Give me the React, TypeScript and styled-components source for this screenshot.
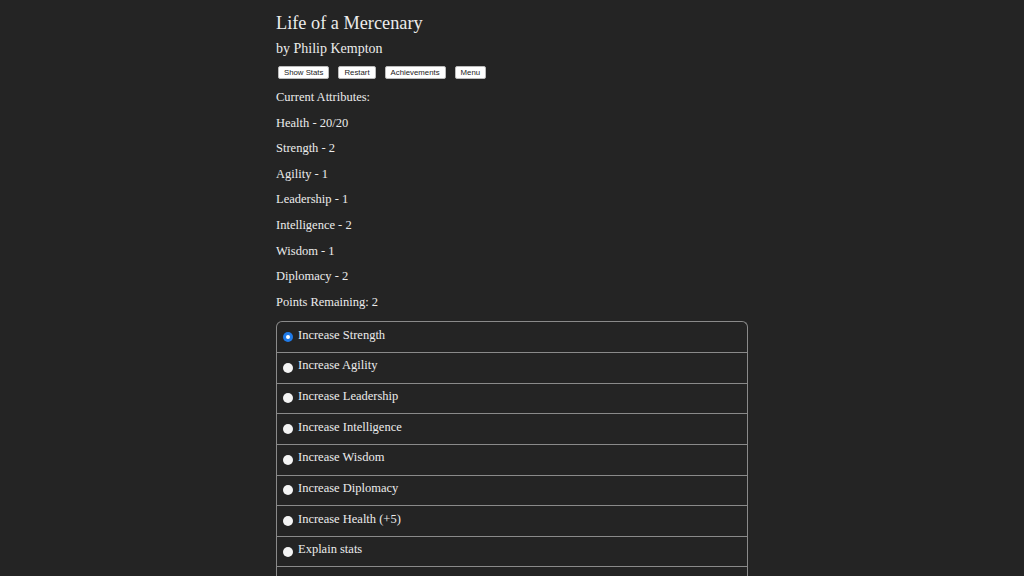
import React, { useState } from "react";
import styled, { createGlobalStyle } from "styled-components";

const GlobalStyle = createGlobalStyle`
  html, body {
    margin: 0;
    padding: 0;
    background: #242424;
  }
`;

const Page = styled.div`
  min-height: 576px;
  background: #242424;
  color: #ececec;
  font-family: "Palatino Linotype", "Book Antiqua", Palatino, "Liberation Serif", serif;
  display: flex;
  justify-content: center;
`;

const Column = styled.div`
  width: 472px;
  padding-top: 12px;
`;

const Title = styled.h1`
  margin: 0;
  font-size: 18.3px;
  font-weight: normal;
  line-height: 22px;
`;

const Author = styled.h2`
  margin: 6px 0 0;
  font-size: 14px;
  font-weight: normal;
  line-height: 18px;
`;

const ButtonBar = styled.div`
  display: flex;
  gap: 9px;
  margin: 8px 0 0 2px;
`;

const SmallButton = styled.button`
  font-family: "Liberation Sans", Arial, sans-serif;
  font-size: 7.8px;
  line-height: 9px;
  padding: 1px 5px;
  background: #fff;
  color: #222;
  border: 1px solid #bbb;
  border-radius: 2px;
`;

const Attrs = styled.div`
  margin-top: 6px;
`;

const AttrLine = styled.div`
  font-size: 12.5px;
  line-height: 25.6px;
`;

const Choices = styled.div`
  margin-top: 6px;
  border: 1px solid #8a8a8a;
  border-radius: 6px 6px 0 0;
  border-bottom: none;
`;

const Choice = styled.label`
  display: flex;
  align-items: center;
  box-sizing: border-box;
  height: 30.65px;
  padding: 0 0 2px 6px;
  font-size: 12.5px;
  border-bottom: 1px solid #8a8a8a;
  cursor: pointer;
`;

const Radio = styled.span<{ $checked: boolean }>`
  width: 10px;
  height: 10px;
  border-radius: 50%;
  margin-right: 5px;
  margin-top: 2px;
  box-sizing: border-box;
  background: ${(p) => (p.$checked ? "#1f7ae8" : "#f4f4f4")};
  position: relative;
  flex-shrink: 0;
  &::after {
    content: "";
    display: ${(p) => (p.$checked ? "block" : "none")};
    position: absolute;
    left: 3px;
    top: 3px;
    width: 4px;
    height: 4px;
    border-radius: 50%;
    background: #fff;
  }
`;

const ChoiceText = styled.span`
  margin-top: -2px;
`;

const attributes = [
  "Current Attributes:",
  "Health - 20/20",
  "Strength - 2",
  "Agility - 1",
  "Leadership - 1",
  "Intelligence - 2",
  "Wisdom - 1",
  "Diplomacy - 2",
  "Points Remaining: 2",
];

const options = [
  "Increase Strength",
  "Increase Agility",
  "Increase Leadership",
  "Increase Intelligence",
  "Increase Wisdom",
  "Increase Diplomacy",
  "Increase Health (+5)",
  "Explain stats",
  "Done",
];

export default function App() {
  const [picked, setPicked] = useState(0);
  return (
    <>
      <GlobalStyle />
      <Page>
        <Column>
          <Title>Life of a Mercenary</Title>
          <Author>by Philip Kempton</Author>
          <ButtonBar>
            <SmallButton>Show Stats</SmallButton>
            <SmallButton>Restart</SmallButton>
            <SmallButton>Achievements</SmallButton>
            <SmallButton>Menu</SmallButton>
          </ButtonBar>
          <Attrs>
            {attributes.map((a) => (
              <AttrLine key={a}>{a}</AttrLine>
            ))}
          </Attrs>
          <Choices>
            {options.map((o, i) => (
              <Choice key={o} onClick={() => setPicked(i)}>
                <Radio $checked={picked === i} />
                <ChoiceText>{o}</ChoiceText>
              </Choice>
            ))}
          </Choices>
        </Column>
      </Page>
    </>
  );
}
